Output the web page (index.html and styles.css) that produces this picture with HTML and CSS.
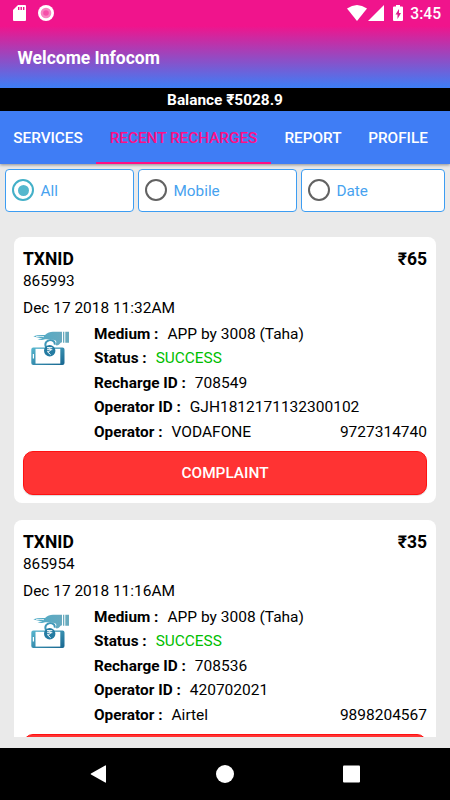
FILE: index.html
```html
<!DOCTYPE html>
<html lang="en">
<head>
<meta charset="utf-8">
<title>Welcome Infocom</title>
<link rel="stylesheet" href="styles.css">
</head>
<body>
<svg class="defs" width="0" height="0">
  <defs>
    <linearGradient id="teal" x1="0" y1="0" x2="1" y2="1"><stop offset="0" stop-color="#58b7cf"/><stop offset="1" stop-color="#17658f"/></linearGradient>
    <linearGradient id="hand" x1="0" y1="0" x2="1" y2="0"><stop offset="0" stop-color="#4cabc7"/><stop offset="1" stop-color="#67a9bf"/></linearGradient>
    <symbol id="pay" viewBox="0 0 40 36">
      <path d="M3 17.500h29.500a2 2 0 0 1 2 2V33a2 2 0 0 1-2 2H3.300a2 2 0 0 1-2-2V19.500a2 2 0 0 1 2-2z" fill="url(#teal)"/>
      <path d="M5.500 18.800h24.800v14.800H5.500z" fill="#fff"/>
      <path d="M3.400 24v4.500" stroke="#fff" stroke-width="1.200"/>
      <path d="M3.300 6.200C7 4.800 11 4.800 15 5 17.500 2.800 20 1.800 23 1.800h9v10.400c-2 .2-2.500 3.200-5.300 3.200-1.200 0-1.600-1.300-.6-2.300.7-.9-.1-2.600-1.600-3l-8-.9c-2 0-3 .5-4.500.8-1.500.1-3-.3-4.500-1 2-.1 3.600-.3 5-1C9.500 8 6 7.300 3.300 6.200z" fill="url(#hand)"/>
      <path d="M6 6.700c2.800-.5 5-.4 8 0" stroke="#fff" stroke-width=".8" fill="none"/>
      <path d="M16.200 17.500c-2.200-4 .3-7.300 4-7.300 3.500 0 5.200 2 4.200 4.500" stroke="#3f97b8" stroke-width="2" fill="none"/>
      <path d="M17.400 14.800c-.5-4.500 6.200-4.900 6 .2z" fill="#fff"/>
      <path d="M33 1.800h1.300v11H33zM35.300 1.800h3.700v11h-3.700z" fill="#68aabd"/>
      <circle cx="19.700" cy="20.700" r="5.700" fill="#247ba2"/>
      <path d="M17.100 17.700h5.200M17.100 19.700h5.200M17.400 17.700c4.200 0 4.200 4 0 4l3.200 3" fill="none" stroke="#fff" stroke-width="1"/>
    </symbol>
  </defs>
</svg>
<header class="header">
  <div class="status">
    <svg class="sd" viewBox="0 0 13 16"><path d="M5 0h7a1 1 0 0 1 1 1v14a1 1 0 0 1-1 1H1a1 1 0 0 1-1-1V5z" fill="#fff"/><path d="M5.700 2v3M8.200 2v3M10.700 2v3" stroke="#f0148c" stroke-width="1.400"/></svg>
    <svg class="rec" viewBox="0 0 16 16"><circle cx="8" cy="8" r="8" fill="#fff"/><circle cx="8" cy="8" r="5.300" fill="#f884c2"/><circle cx="8" cy="8" r="2.800" fill="#f550a9"/></svg>
    <svg class="wifi" viewBox="0 0 20 16"><path d="M0 3.600Q10-3.600 20 3.600L10 16z" fill="#fff"/></svg>
    <svg class="signal" viewBox="0 0 16 16"><path d="M16 0v16H0z" fill="#fff"/></svg>
    <svg class="battery" viewBox="0 0 10 16"><path d="M3 0h4v1.500h2a1 1 0 0 1 1 1V15a1 1 0 0 1-1 1H1a1 1 0 0 1-1-1V2.500a1 1 0 0 1 1-1h2z" fill="#fff"/><path d="M6 4L2.500 9.500h2V14L8 8H6z" fill="#dd1d8c"/></svg>
    <span>3:45</span>
  </div>
  <h1>Welcome Infocom</h1>
</header>
<div class="balance">Balance ₹5028.9</div>
<nav class="tabs">
  <a class="tab services">SERVICES</a>
  <a class="tab recent">RECENT RECHARGES</a>
  <a class="tab report">REPORT</a>
  <a class="tab profile">PROFILE</a>
</nav>
<section class="filters">
  <label class="filter on"><i class="radio"></i><span>All</span></label>
  <label class="filter"><i class="radio"></i><span>Mobile</span></label>
  <label class="filter"><i class="radio"></i><span>Date</span></label>
</section>
<main class="list">
  <article class="card">
    <div class="top"><span>TXNID</span><span>₹65</span></div>
    <div class="txn">865993</div>
    <div class="date">Dec 17 2018 11:32AM</div>
    <div class="body">
      <svg class="pay"><use href="#pay"/></svg>
      <div class="details">
        <div class="row"><b>Medium :</b><span>APP by 3008 (Taha)</span></div>
        <div class="row"><b>Status :</b><span class="success">SUCCESS</span></div>
        <div class="row"><b>Recharge ID :</b><span>708549</span></div>
        <div class="row"><b>Operator ID :</b><span>GJH1812171132300102</span></div>
        <div class="row"><b>Operator :</b><span>VODAFONE</span><span class="number">9727314740</span></div>
      </div>
    </div>
    <button class="complaint">COMPLAINT</button>
  </article>
  <article class="card">
    <div class="top"><span>TXNID</span><span>₹35</span></div>
    <div class="txn">865954</div>
    <div class="date">Dec 17 2018 11:16AM</div>
    <div class="body">
      <svg class="pay"><use href="#pay"/></svg>
      <div class="details">
        <div class="row"><b>Medium :</b><span>APP by 3008 (Taha)</span></div>
        <div class="row"><b>Status :</b><span class="success">SUCCESS</span></div>
        <div class="row"><b>Recharge ID :</b><span>708536</span></div>
        <div class="row"><b>Operator ID :</b><span>420702021</span></div>
        <div class="row"><b>Operator :</b><span>Airtel</span><span class="number">9898204567</span></div>
      </div>
    </div>
    <button class="complaint"></button>
  </article>
</main>
<footer class="nav">
  <svg viewBox="0 0 18 18"><path d="M16.200.5Q17 0 17 1v16q0 1-.8.500L2 9.500q-.8-.5 0-1z" fill="#fff"/></svg>
  <svg viewBox="0 0 18 18"><circle cx="9" cy="9" r="9" fill="#fff"/></svg>
  <svg viewBox="0 0 18 18"><rect x="0" y=".5" width="17" height="17" rx="1" fill="#fff"/></svg>
</footer>
</body>
</html>
```
FILE: styles.css
```css
* { box-sizing: border-box; }
body {
  margin: 0;
  width: 450px;
  height: 800px;
  overflow: hidden;
  display: flex;
  flex-direction: column;
  background: #eaeaea;
  font-family: Roboto, "Noto Sans", sans-serif;
  font-size: 15.3px;
  color: #000;
}
.defs { position: absolute; }
.header {
  height: 88px;
  flex: none;
  background: linear-gradient(#f0148c 26px, #3f7df5 87px);
  color: #fff;
}
.status {
  height: 26px;
  padding: 5px 9px 0 13px;
  display: flex;
  font-size: 15.6px;
  font-weight: 500;
  line-height: 18px;
}
.sd { width: 13px; height: 16px; }
.rec { width: 16px; height: 16px; margin-left: 12px; }
.wifi { width: 20px; height: 16px; margin-left: auto; }
.signal { width: 16px; height: 16px; margin-left: 1px; }
.battery { width: 10px; height: 16px; margin: 0 7px 0 9px; }
h1 {
  margin: 21px 0 0 17.5px;
  font-size: 17.5px;
  font-weight: 700;
  line-height: 22px;
}
.balance {
  height: 23px;
  flex: none;
  background: #000;
  color: #fff;
  text-align: center;
  font-size: 15.4px;
  font-weight: 700;
  line-height: 24px;
}
.tabs {
  height: 53px;
  flex: none;
  display: flex;
  background: #3f7df5;
  color: #fff;
  font-weight: 500;
  line-height: 54px;
  box-shadow: 0 1px 3px rgba(0, 0, 0, .4);
}
.tab { text-align: center; white-space: nowrap; }
.services { width: 96px; }
.recent { width: 175px; color: #ff0e86; border-bottom: 2px solid #ff0e86; }
.report { width: 84px; }
.profile { width: 86px; }
.filters {
  flex: none;
  display: grid;
  grid-template-columns: 129px 159px 144px;
  gap: 4px;
  padding: 5px 5px 7px;
  height: 55px;
}
.filter {
  display: flex;
  align-items: center;
  gap: 7px;
  height: 43px;
  padding-left: 5.5px;
  border: 1px solid #3d9df2;
  border-radius: 4px;
  background: #fff;
  color: #47a2ef;
}
.radio {
  width: 22px;
  height: 22px;
  margin-top: -1px;
  padding: 4px;
  border: 2px solid #626262;
  border-radius: 50%;
}
.on .radio { padding: 3.5px; border-color: #43b0c8; background: #54b7cd content-box; }
.list {
  flex: none;
  height: 518px;
  overflow: hidden;
  padding: 18px 14px 0;
}
.card {
  height: 265.5px;
  margin-bottom: 17.5px;
  padding: 11px 9px 0;
  border-radius: 8px;
  background: #fff;
}
.top {
  display: flex;
  justify-content: space-between;
  font-size: 17.5px;
  font-weight: 700;
  line-height: 22px;
}
.txn { line-height: 22px; }
.date { line-height: 20px; margin-top: 6px; font-size: 15.45px; }
.body { display: flex; height: 126px; margin-top: 3.5px; }
.pay { width: 40px; height: 36px; margin: 8px 0 0 7px; }
.details { flex: 1; margin-left: 24px; }
.row { display: flex; height: 24.6px; line-height: 24px; white-space: nowrap; }
.row b { font-size: 15.35px; }
.row span { margin-left: 9px; font-size: 15.5px; }
.row .number { margin-left: auto; }
.row .success { color: #00be00; font-size: 15.4px; }
.complaint {
  display: block;
  width: 100%;
  height: 44px;
  margin: 3px 0 0;
  padding: 0;
  border: 1px solid #f11;
  border-radius: 10px;
  background: #f33;
  color: #fff;
  font: 500 15.4px Roboto, sans-serif;
  box-shadow: 0 1px 1px rgba(0, 0, 0, .15);
}
.nav {
  margin-top: auto;
  flex: none;
  height: 52px;
  background: #000;
  display: flex;
  align-items: center;
  justify-content: center;
  gap: 109px;
}
.nav svg { width: 18px; height: 18px; }
```
